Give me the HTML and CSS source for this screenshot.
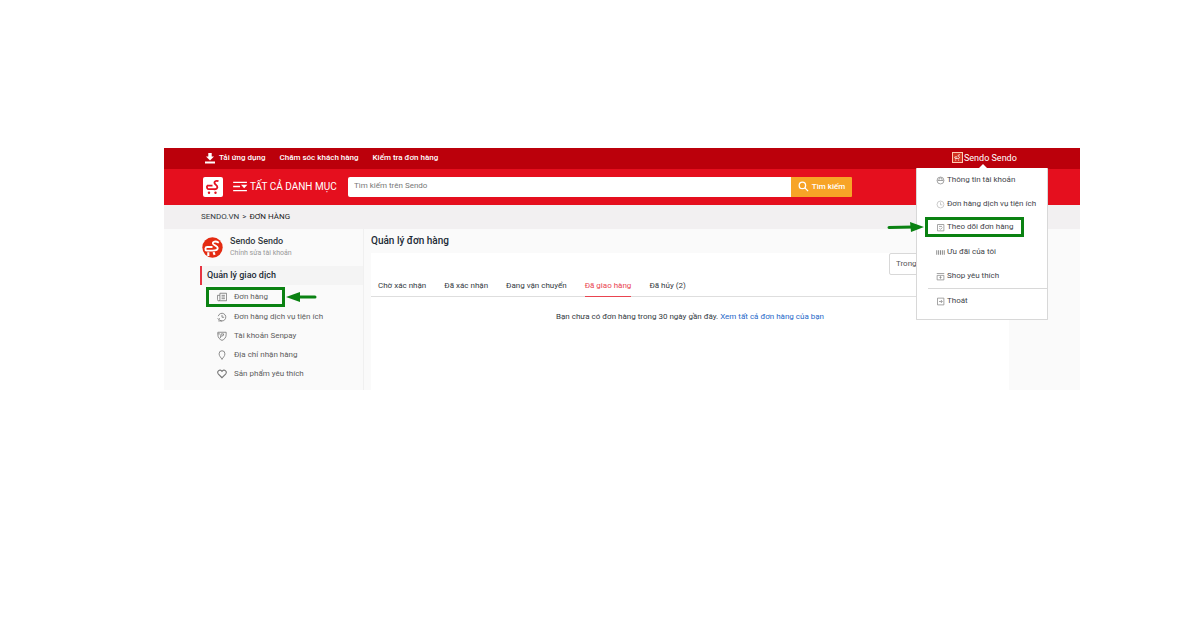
FILE: index.html
```html
<!DOCTYPE html>
<html lang="vi">
<head>
<meta charset="utf-8">
<meta name="viewport" content="width=device-width, initial-scale=1">
<title>Quản lý đơn hàng</title>
<link rel="stylesheet" href="styles.css">
</head>
<body>
<svg class="defs" aria-hidden="true">
  <symbol id="cart" viewBox="0 0 20 20">
    <path d="M15.500 4.200C12.500 3.200 10.600 4.800 12 6.900L14 9C15.200 11 13.400 12.500 10.500 12.200H5.500M4 8.700H9.500M4 8.700C3.700 11 4.300 12.300 6 12.200" fill="none" stroke="currentColor" stroke-width="1.800"/>
    <circle cx="6" cy="15.700" r="1.200" fill="currentColor"/><circle cx="12.500" cy="15.700" r="1.200" fill="currentColor"/>
  </symbol>
  <symbol id="arrow" viewBox="0 0 38 12">
    <path d="M2 6.500L26 6" stroke="#0a8212" stroke-width="3" stroke-linecap="round"/>
    <path d="M23 1L37 6L24 11Z" fill="#0a8212"/>
  </symbol>
  <symbol id="arrow-left" viewBox="0 0 32 12">
    <path d="M12 6H30" stroke="#0a8212" stroke-width="3" stroke-linecap="round"/>
    <path d="M15 1L1 6L15 11Z" fill="#0a8212"/>
  </symbol>
  <symbol id="clock" viewBox="0 0 12 12">
    <path d="M2 8.500A4.600 4.600 0 1 0 1.500 5M6 3.500V6.300H8.500M.8 7.500L2 8.800L3.300 7.500M1.500 10.700H6" fill="none" stroke="currentColor"/>
  </symbol>
</svg>
<div class="page">
  <div class="topbar">
    <nav class="links">
      <a href="#"><svg class="download" viewBox="0 0 10 12"><path d="M3.300 1H6.700V4.500H9L5 8.500L1 4.500H3.300ZM0 9.500H10V11.500H0Z" fill="#fff"/></svg>Tải ứng dụng</a>
      <a href="#">Chăm sóc khách hàng</a>
      <a href="#">Kiểm tra đơn hàng</a>
    </nav>
    <div class="account">
      <button class="user" type="button"><svg class="badge"><use href="#cart"/></svg>Sendo Sendo</button>
      <div class="menu">
        <a href="#"><svg viewBox="0 0 12 12"><circle cx="6" cy="6" r="4.600"/><path d="M2 6H10M4 6V4.500A2 2 0 0 1 8 4.500V6"/></svg>Thông tin tài khoản</a>
        <a href="#"><svg class="pale" viewBox="0 0 12 12"><circle cx="6" cy="6" r="4.600"/><path d="M6 3V6.500H8.500"/></svg>Đơn hàng dịch vụ tiện ích</a>
        <a href="#" class="marked"><svg viewBox="0 0 12 12"><path d="M2 2H10.500V10.500H2ZM4 4.500H8M4.500 7L6 8.500L8.500 6"/></svg>Theo dõi đơn hàng</a>
        <a href="#"><svg viewBox="0 0 12 12"><path d="M1 3V9M3.500 3V9M6 3V9M8.500 3V9M11 3V9" stroke-width="1.300"/></svg>Ưu đãi của tôi</a>
        <a href="#"><svg viewBox="0 0 12 12"><path d="M1.500 4.500H10.500V10.500H1.500ZM1 2H11M6 5.500V9M4.500 7.200H7.500"/></svg>Shop yêu thích</a>
        <hr>
        <a href="#"><svg viewBox="0 0 12 12"><path d="M2 1.500H10.500V10.500H2ZM4 6H8M6.500 4L8.500 6L6.500 8"/></svg>Thoát</a>
        <svg class="arrow menu-arrow"><use href="#arrow"/></svg>
      </div>
    </div>
  </div>
  <header class="header">
    <a class="logo" href="#" aria-label="Sendo"><svg><use href="#cart"/></svg></a>
    <button class="categories" type="button"><svg viewBox="0 0 16 12"><path d="M0 1.500H15M0 6H7.500M0 10.500H15" stroke="#fff" stroke-width="1.600"/><path d="M8.500 4.200H15.500L12 8Z" fill="#fff"/></svg>TẤT CẢ DANH MỤC</button>
    <form class="search">
      <input type="text" placeholder="Tìm kiếm trên Sendo" aria-label="Tìm kiếm trên Sendo">
      <button type="button"><svg viewBox="0 0 12 12"><circle cx="4.800" cy="4.800" r="3.500"/><path d="M7.500 7.500L11 11"/></svg>Tìm kiếm</button>
    </form>
  </header>
  <div class="crumbs"><a href="#">SENDO.VN</a><span>&gt;</span><b>ĐƠN HÀNG</b></div>
  <div class="body">
    <aside class="sidebar">
      <div class="profile">
        <svg viewBox="0 0 20 20"><circle cx="10" cy="10" r="9.700" fill="#e42b12"/><path d="M16 5.500C13 3.500 9.800 4.200 10.500 6.500C11 8 15 8.300 15 10.500C15 13 12 13 10 13H4.500C2.500 12.500 3 9.500 5 9.500H10" fill="none" stroke="#fff" stroke-width="1.800"/><path d="M6 14.500V18M11 14.500L12 17" stroke="#fff" stroke-width="2"/></svg>
        <div><strong>Sendo Sendo</strong><a href="#">Chỉnh sửa tài khoản</a></div>
      </div>
      <h2>Quản lý giao dịch</h2>
      <nav class="side-links">
        <a href="#" class="current"><svg viewBox="0 0 12 12"><path d="M3.500 1.500H11.500V10.500H2A1.500 1.500 0 0 1 .5 9V4H3.500ZM3.500 4V9A1.500 1.500 0 0 1 2 10.500M5.500 4H9.500M5.500 6H9.500M5.500 8H9.500"/></svg>Đơn hàng</a>
        <a href="#"><svg><use href="#clock"/></svg>Đơn hàng dịch vụ tiện ích</a>
        <a href="#"><svg viewBox="0 0 12 12"><path d="M1 1.500H11V4C11 8 9 10 6 11.300C3 10 1 8 1 4ZM4 8.500L5 3.500H8Q8.500 6 5 6.300M1 3.500H3.500"/></svg>Tài khoản Senpay</a>
        <a href="#"><svg viewBox="0 0 12 12"><path d="M6 11.300C5 9 2.500 7.500 2.500 4.600A3.500 3.700 0 0 1 9.500 4.600C9.500 7.500 7 9 6 11.300Z"/></svg>Địa chỉ nhận hàng</a>
        <a href="#"><svg viewBox="0 0 12 12"><path d="M6 10.500L1.700 6.200C-.8 3 3.500-.8 6 2.800C8.500-.8 12.800 3 10.300 6.200Z" stroke-width="1.300"/></svg>Sản phẩm yêu thích</a>
      </nav>
      <svg class="arrow side-arrow"><use href="#arrow-left"/></svg>
    </aside>
    <main class="main">
      <h1>Quản lý đơn hàng</h1>
      <section class="orders">
        <div class="filter"><select aria-label="Khoảng thời gian"><option>Trong 30 ngày gần đây</option></select></div>
        <nav class="tabs">
          <a href="#">Chờ xác nhận</a><a href="#">Đã xác nhận</a><a href="#">Đang vận chuyển</a><a href="#" class="active">Đã giao hàng</a><a href="#">Đã hủy (2)</a>
        </nav>
        <p>Bạn chưa có đơn hàng trong 30 ngày gần đây. <a href="#">Xem tất cả đơn hàng của bạn</a></p>
      </section>
    </main>
  </div>
</div>
</body>
</html>
```
FILE: styles.css
```css
* { box-sizing: border-box; }
body {
  margin: 0;
  background: #fff;
  color: #333a42;
  font: 8px/12px Roboto, "Noto Sans", sans-serif;
}
a { color: inherit; text-decoration: none; }
button, input, select { font: inherit; border: 0; margin: 0; padding: 0; }
button { background: none; color: inherit; }
.defs { position: absolute; width: 0; height: 0; }
.page { margin: 148px 10% 0 164px; background: #fafafa; }

.topbar {
  display: flex;
  justify-content: space-between;
  padding: 0 32px 0 41px;
  height: 21px;
  background: #bb000b;
  color: #fff;
}
.links { display: flex; gap: 14px; align-items: center; padding-bottom: 2px; font-weight: 500; }
.links a { display: flex; align-items: center; }
.download { width: 10px; height: 12px; margin-right: 4px; }
.account { position: relative; width: 132px; }
.user { display: flex; align-items: center; gap: 1px; height: 19px; padding-left: 36px; font-size: 9px; }
.badge { width: 11px; height: 11px; border: 1px solid #ffc9b0; background: #d33322; }
.menu {
  position: absolute;
  z-index: 2;
  top: 20px;
  left: 0;
  width: 100%;
  background: #fff;
  color: #3f454b;
  border: 1px solid #d8d8d8;
  border-top: 0;
  border-radius: 1px;
  padding-bottom: 6px;
}
.menu::before {
  content: "";
  position: absolute;
  top: -4px;
  left: 62px;
  border: 4px solid transparent;
  border-top: 0;
  border-bottom: 4px solid #fff;
}
.menu a { display: flex; align-items: center; gap: 2px; height: 24px; padding-left: 19px; white-space: nowrap; }
.menu a svg { width: 9px; height: 9px; fill: none; stroke: #888; }
.menu a .pale { stroke: #bbb; }
.menu .marked { height: 20px; margin: 1px 23px 3px 8px; padding-left: 8px; border: 3px solid #0a8212; }
.menu hr { margin: 0 0 0 11px; border: 0; border-top: 1px solid #d8d8d8; }
.arrow { position: absolute; width: 38px; height: 12px; }
.menu-arrow { top: 53px; left: -30px; }

.header {
  display: flex;
  align-items: center;
  padding: 0 228px 1px 39px;
  height: 36px;
  background: #e50f1e;
  color: #fff;
}
.logo { display: grid; width: 20px; height: 20px; background: #fff; border-radius: 2px; color: #e50f1e; margin-right: 10px; }
.logo svg { width: 20px; height: 20px; }
.categories { display: flex; align-items: center; gap: 2px; width: 115px; font-size: 10px; white-space: nowrap; }
.categories svg { width: 15px; height: 11px; }
.search { display: flex; flex: 1; height: 20px; }
.search input { flex: 1; min-width: 0; padding: 0 6px 1px; border-radius: 2px 0 0 2px; background: #fff; }
.search input::placeholder { color: #777; }
.search button { display: flex; align-items: center; justify-content: center; gap: 3px; width: 61px; background: #f7a427; border-radius: 0 1px 1px 0; font-weight: 500; }
.search svg { width: 11px; height: 11px; fill: none; stroke: #fff; stroke-width: 1.4; }

.crumbs { display: flex; align-items: center; gap: 3px; height: 24px; padding-left: 37px; background: #f2f0f1; }
.crumbs b { font-weight: 400; color: #222; }

.body { display: flex; padding: 0 71px 0 36px; }
.sidebar { position: relative; width: 164px; margin-right: 7px; border-right: 1px solid #f0f0f0; }
.profile { display: flex; align-items: center; gap: 7px; height: 37px; padding-left: 2px; }
.profile > svg { width: 21px; height: 21px; }
.profile strong, .profile a { display: block; }
.profile strong { font-size: 9px; font-weight: 500; }
.profile a { color: #999; font-size: 7px; line-height: 13px; }
h1, h2 { margin: 0; font-weight: 500; color: #222b36; }
h2 { padding-left: 5px; border-left: 2px solid #e63442; background: #f4f4f4; font-size: 9px; line-height: 19px; }
.side-links { padding: 2px 0 7px 6px; color: #5d5d5d; }
.side-links a { display: flex; align-items: center; gap: 7px; height: 19px; padding-left: 11px; }
.side-links svg { width: 10px; height: 10px; fill: none; stroke: #777; color: #777; }
.side-links .current { width: 79px; height: 20px; padding-left: 8px; border: 3px solid #0a8212; }
.side-arrow { top: 62px; left: 85px; width: 32px; }

.main { flex: 1; min-width: 0; display: flex; flex-direction: column; }
h1 { font-size: 10px; line-height: 24px; }
.orders { flex: 1; background: #fff; }
.filter { display: flex; justify-content: flex-end; height: 22px; }
.filter select { width: 120px; height: 22px; padding: 0 6px; border: 1px solid #d8d8d8; border-radius: 2px; background: #fff; color: #555; appearance: none; }
.tabs { display: flex; gap: 18px; padding-left: 7px; border-bottom: 1px solid #dedede; }
.tabs a { line-height: 21px; margin-bottom: -1px; border-bottom: 1px solid transparent; }
.tabs .active { color: #e94450; border-color: #e94450; }
.orders p { margin: 0; padding: 14px 0; text-align: center; }
.orders p a { color: #2668c9; }
```
